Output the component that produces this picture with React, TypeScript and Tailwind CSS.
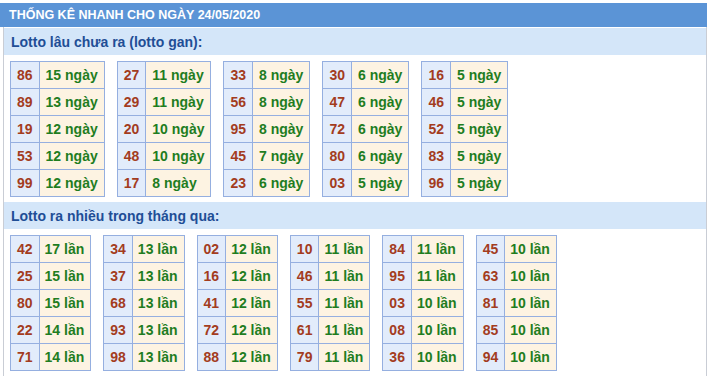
const gan: [string, string][][] = [
  [["86", "15"], ["89", "13"], ["19", "12"], ["53", "12"], ["99", "12"]],
  [["27", "11"], ["29", "11"], ["20", "10"], ["48", "10"], ["17", "8"]],
  [["33", "8"], ["56", "8"], ["95", "8"], ["45", "7"], ["23", "6"]],
  [["30", "6"], ["47", "6"], ["72", "6"], ["80", "6"], ["03", "5"]],
  [["16", "5"], ["46", "5"], ["52", "5"], ["83", "5"], ["96", "5"]],
];

const nhieu: [string, string][][] = [
  [["42", "17"], ["25", "15"], ["80", "15"], ["22", "14"], ["71", "14"]],
  [["34", "13"], ["37", "13"], ["68", "13"], ["93", "13"], ["98", "13"]],
  [["02", "12"], ["16", "12"], ["41", "12"], ["72", "12"], ["88", "12"]],
  [["10", "11"], ["46", "11"], ["55", "11"], ["61", "11"], ["79", "11"]],
  [["84", "11"], ["95", "11"], ["03", "10"], ["08", "10"], ["36", "10"]],
  [["45", "10"], ["63", "10"], ["81", "10"], ["85", "10"], ["94", "10"]],
];

function StatTable({ rows, unit, tight }: { rows: [string, string][]; unit: string; tight?: boolean }) {
  return (
    <table className="border-collapse">
      <tbody>
        {rows.map(([num, count], i) => (
          <tr key={i}>
            <td className="h-[27px] border border-[#95afe0] bg-[#e2ecfb] px-[6px] text-[#a33c1e]">
              {num}
            </td>
            <td
              className={
                tight
                  ? "h-[27px] border border-[#95afe0] bg-[#fdf3e2] pl-[5px] pr-[6px] text-[#1f7d1f]"
                  : "h-[27px] border border-[#95afe0] bg-[#fdf3e2] px-[6px] text-[#1f7d1f]"
              }
            >
              {count} {unit}
            </td>
          </tr>
        ))}
      </tbody>
    </table>
  );
}

function Section({
  title,
  tables,
  unit,
  tight,
}: {
  title: string;
  tables: [string, string][][];
  unit: string;
  tight?: boolean;
}) {
  return (
    <>
      <div className="flex h-[27px] items-center bg-[#d4e6f9] px-[7px] text-[14px] font-bold text-[#1f4e96]">
        {title}
      </div>
      <div className="flex gap-3 px-[6px] pt-[6px] pb-[5px]">
        {tables.map((t, i) => (
          <StatTable key={i} rows={t} unit={unit} tight={tight} />
        ))}
      </div>
    </>
  );
}

export default function App() {
  return (
    <div className="h-[376px] w-[711px] bg-white pt-[3px] font-['Liberation_Sans',Arial,sans-serif] text-[14px] font-bold leading-4">
      <div className="flex h-[24px] w-[707px] items-center bg-[#5b94d6] px-[9px] text-[12.5px] text-white">
        THỐNG KÊ NHANH CHO NGÀY 24/05/2020
      </div>
      <div className="ml-[3px] h-[349px] w-[704px] border-x border-[#c9cdd5] pt-px">
        <Section title="Lotto lâu chưa ra (lotto gan):" tables={gan} unit="ngày" />
        <Section title="Lotto ra nhiều trong tháng qua:" tables={nhieu} unit="lần" tight />
      </div>
    </div>
  );
}
